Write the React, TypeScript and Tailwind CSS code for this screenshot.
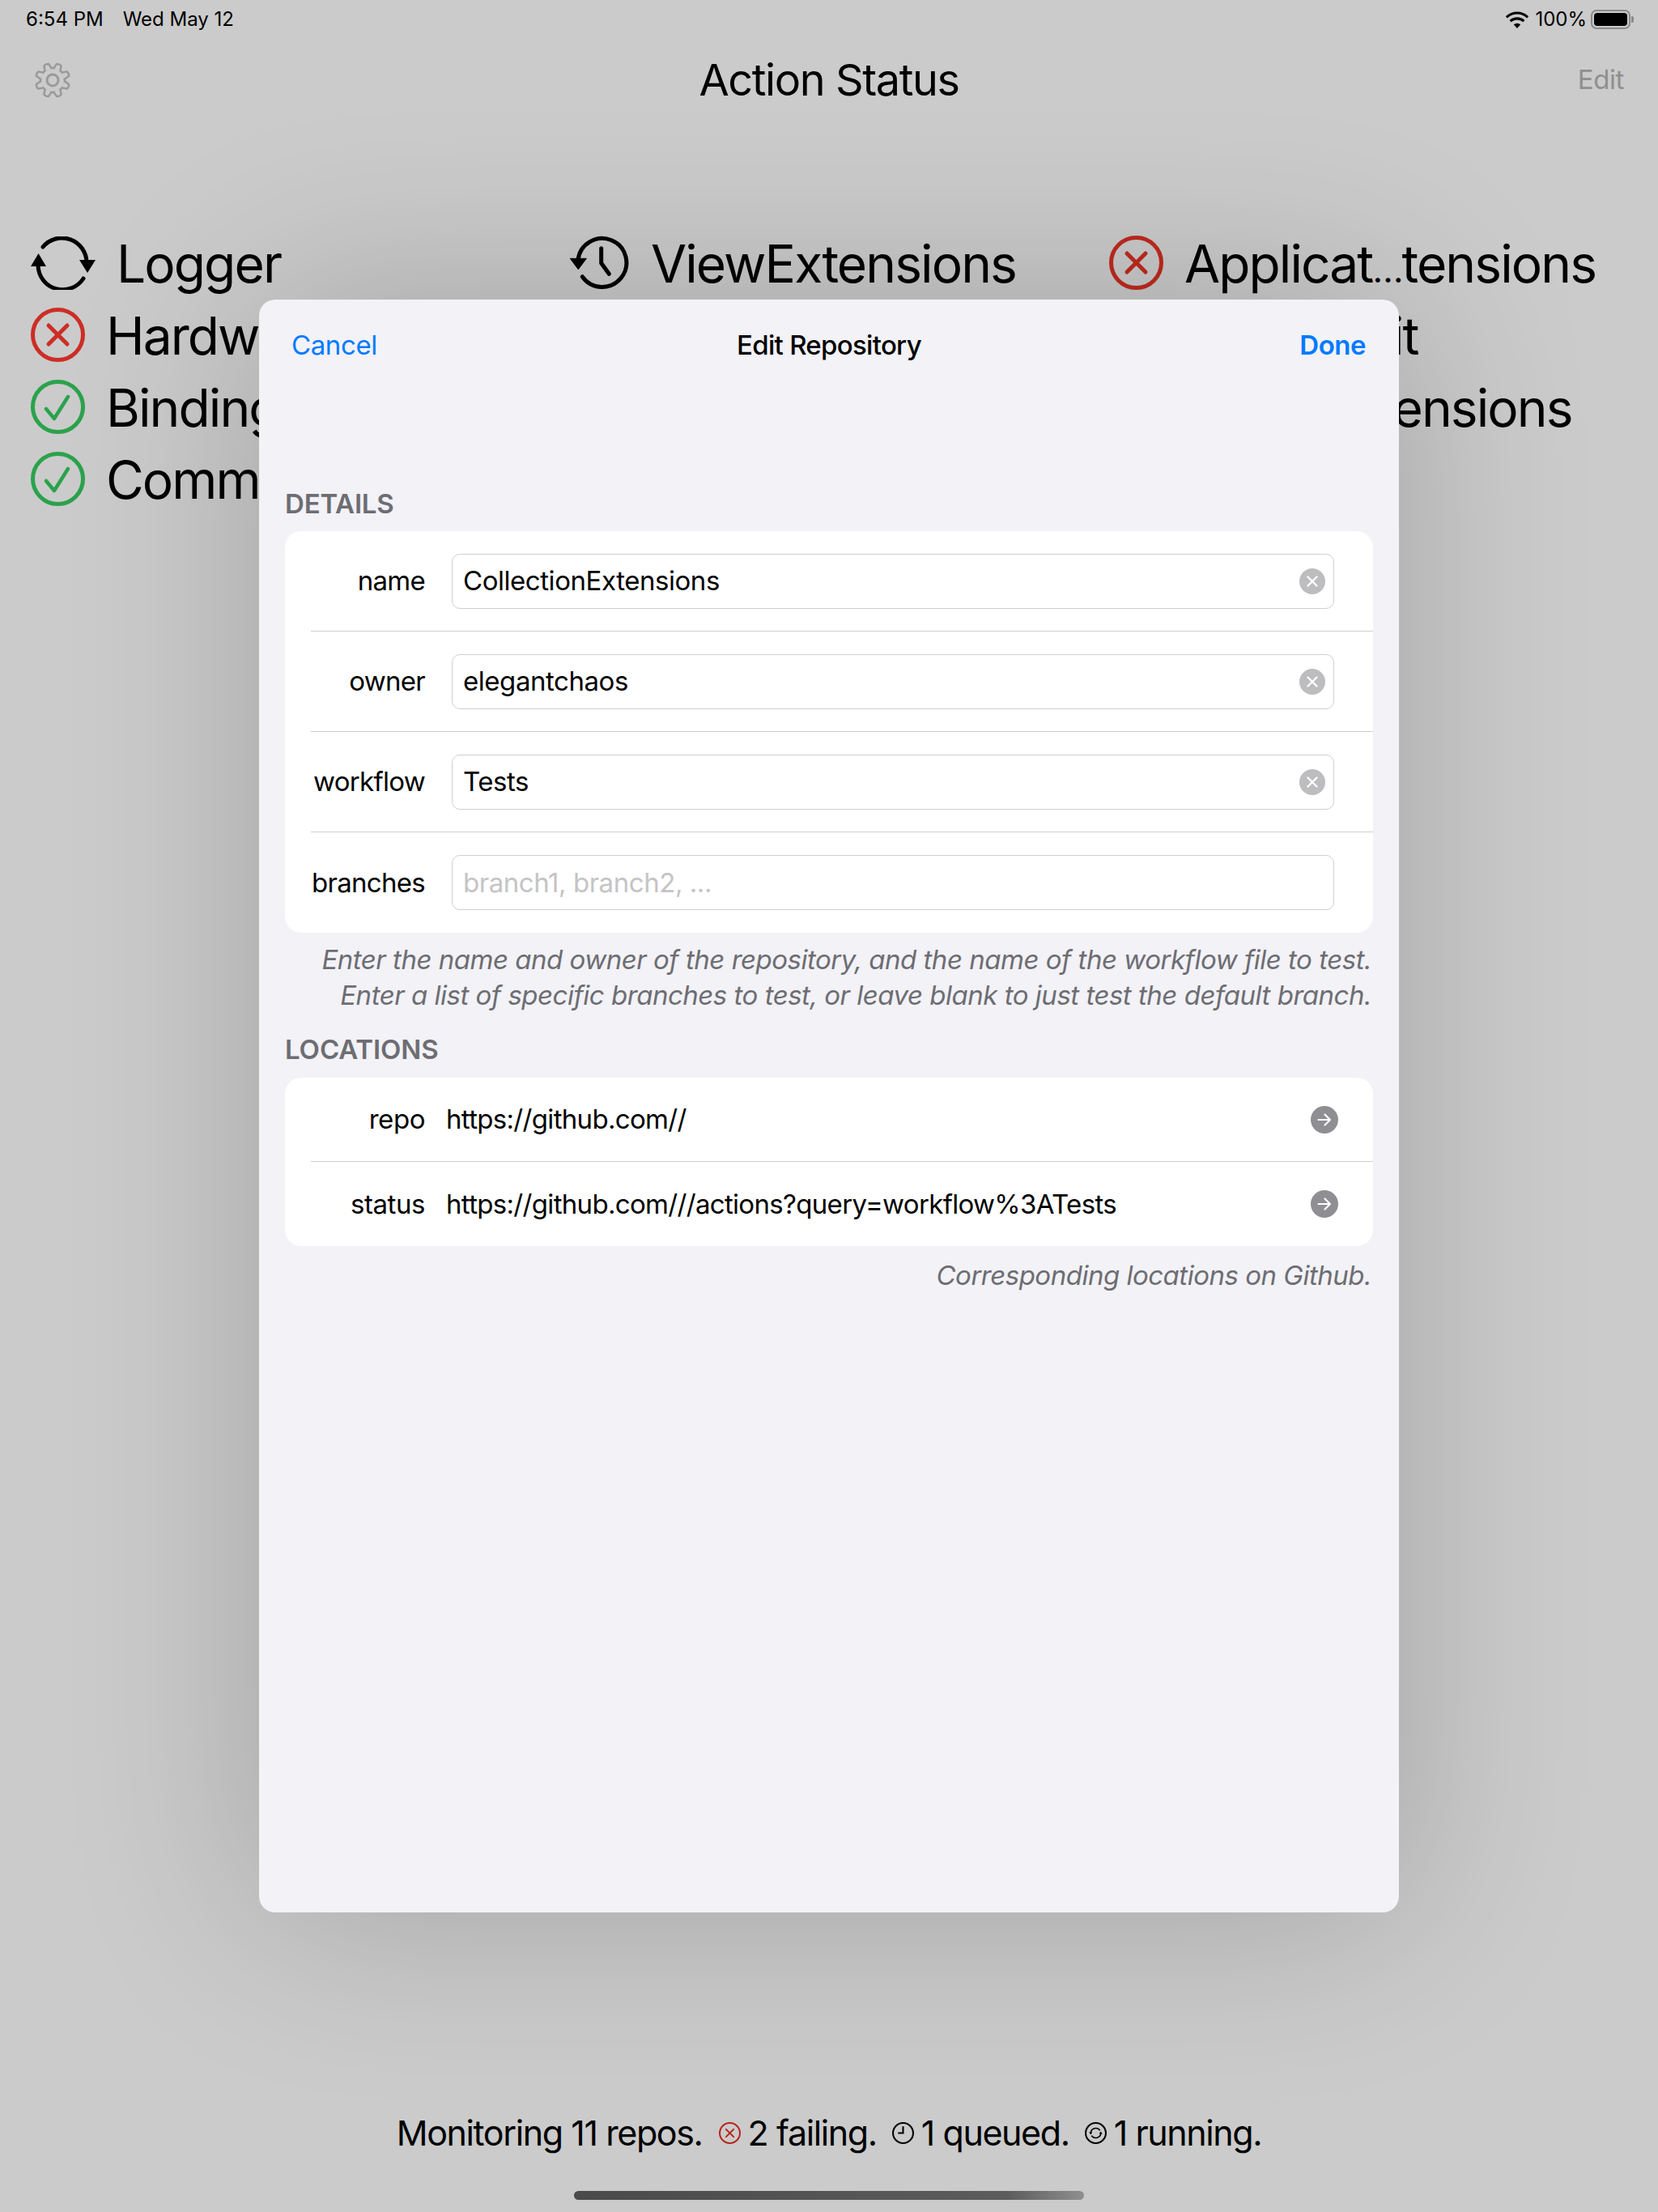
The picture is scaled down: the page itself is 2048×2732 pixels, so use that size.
import React from "react";

function XCircle({ cls, size = 67 }: { cls: string; size?: number }) {
  return (
    <svg width={size} height={size} viewBox="0 0 67 67" fill="none" className={cls}>
      <circle cx="33.5" cy="33.5" r="31" stroke="currentColor" strokeWidth="5" />
      <path d="M22 22 L45 45 M45 22 L22 45" stroke="currentColor" strokeWidth="5" strokeLinecap="round" />
    </svg>
  );
}

function CheckCircle() {
  return (
    <svg width="67" height="67" viewBox="0 0 67 67" fill="none" className="text-[#2ba24c] shrink-0">
      <circle cx="33.5" cy="33.5" r="31" stroke="currentColor" strokeWidth="5" />
      <path d="M19 36 L29 48 L46 21" stroke="currentColor" strokeWidth="4.5" strokeLinecap="round" strokeLinejoin="round" />
    </svg>
  );
}

function SyncIcon() {
  return (
    <svg width="80" height="66" viewBox="0 0 80 66" fill="none" className="text-black shrink-0">
      <path d="M15 13 A30.5 30.5 0 0 1 69 33" stroke="currentColor" strokeWidth="5" strokeLinecap="round" />
      <path d="M65 52 A30.5 30.5 0 0 1 9 36" stroke="currentColor" strokeWidth="5" strokeLinecap="round" />
      <polygon points="60,29 80,29 70,45" fill="currentColor" />
      <polygon points="0,37 19,37 9.5,21" fill="currentColor" />
    </svg>
  );
}

function ClockIcon() {
  return (
    <svg width="76" height="70" viewBox="0 0 76 70" fill="none" className="text-black shrink-0">
      <path d="M16.3 51.7 A30 30 0 1 0 11 31" stroke="currentColor" strokeWidth="5" strokeLinecap="round" />
      <polygon points="1.3,29.3 21.3,29.3 11.3,42.7" fill="currentColor" stroke="currentColor" strokeWidth="1" strokeLinejoin="round" />
      <path d="M39.7 16.7 V35 L49.3 48.3" stroke="currentColor" strokeWidth="5" strokeLinecap="round" strokeLinejoin="round" />
    </svg>
  );
}

function GearIcon() {
  const teeth = [0, 45, 90, 135, 180, 225, 270, 315];
  return (
    <svg width="46" height="46" viewBox="0 0 46 46" fill="none" className="text-[#9a9a9a] -mt-[3px]">
      <circle cx="23" cy="23" r="7" stroke="currentColor" strokeWidth="3" />
      <circle cx="23" cy="23" r="15" stroke="currentColor" strokeWidth="2.5" />
      {teeth.map((a) => (
        <path
          key={a}
          d="M18.5 9.5 L20 2.5 Q23 1 26 2.5 L27.5 9.5"
          stroke="currentColor"
          strokeWidth="2.5"
          strokeLinejoin="round"
          fill="#cbcbcb"
          transform={`rotate(${a + 22.5} 23 23)`}
        />
      ))}
    </svg>
  );
}

function Wifi() {
  return (
    <svg width="30" height="21" viewBox="0 0 28 20" fill="none" className="text-black">
      <path d="M1.5 7 A18 18 0 0 1 26.5 7" stroke="currentColor" strokeWidth="3" />
      <path d="M6 11.5 A12 12 0 0 1 22 11.5" stroke="currentColor" strokeWidth="3" />
      <path d="M10 15.5 A6 6 0 0 1 18 15.5 L14 20 Z" fill="currentColor" />
    </svg>
  );
}

function Battery() {
  return (
    <div className="flex items-center">
      <div className="w-[49px] h-[24px] rounded-[7px] border-2 border-[#8a8a8a] p-[2px]">
        <div className="w-full h-full rounded-[4px] bg-black" />
      </div>
      <div className="w-[3px] h-[8px] ml-[1px] rounded-r-[2px] bg-[#8a8a8a]" />
    </div>
  );
}

function ClearBtn() {
  return (
    <div className="w-[32px] h-[32px] rounded-full bg-[#bdbdc0] flex items-center justify-center shrink-0">
      <svg width="16" height="16" viewBox="0 0 16 16" fill="none">
        <path d="M2.5 2.5 L13.5 13.5 M13.5 2.5 L2.5 13.5" stroke="white" strokeWidth="2.4" strokeLinecap="round" />
      </svg>
    </div>
  );
}

function ArrowBtn() {
  return (
    <div className="w-[34px] h-[34px] rounded-full bg-[#8e8e93] flex items-center justify-center shrink-0">
      <svg width="20" height="20" viewBox="0 0 20 20" fill="none">
        <path d="M2.5 10 H17 M10.5 3.5 L17 10 L10.5 16.5" stroke="white" strokeWidth="2.2" strokeLinecap="round" strokeLinejoin="round" />
      </svg>
    </div>
  );
}

function Repo({ icon, name, indent }: { icon: React.ReactNode; name: React.ReactNode; indent: string }) {
  return (
    <div className="flex items-center h-[89px]">
      {icon}
      <span className={`${indent} mt-[2px] text-[64px] leading-none tracking-[-1.9px] text-black whitespace-nowrap`}>{name}</span>
    </div>
  );
}

function FieldRow({ label, value, placeholder, last }: { label: string; value?: string; placeholder?: string; last?: boolean }) {
  return (
    <div className={`h-[124px] ml-[32px] flex items-center ${last ? "" : "border-b-[1.5px] border-[#cfcfd1]"}`}>
      <div className="w-[141px] pt-[1px] text-right text-[33px] tracking-[-0.7px] text-black shrink-0">{label}</div>
      <div className="ml-[33px] w-[1090px] h-[68px] rounded-[10px] border-[1.5px] border-[#cfcfd1] bg-white flex items-center pl-[13px] pr-[10px]">
        <span className={`flex-1 pt-[1px] text-[33px] tracking-[-0.45px] ${value ? "text-black" : "text-[#c4c4c6]"}`}>{value ?? placeholder}</span>
        {value ? <ClearBtn /> : null}
      </div>
    </div>
  );
}

function LinkRow({ label, value, last }: { label: string; value: string; last?: boolean }) {
  return (
    <div className={`h-[104px] ml-[32px] flex items-center pr-[43px] ${last ? "" : "border-b-[1.5px] border-[#cfcfd1]"}`}>
      <div className="w-[141px] pt-[1px] text-right text-[33px] tracking-[-0.45px] text-black shrink-0">{label}</div>
      <div className="ml-[26px] pt-[1px] flex-1 text-[33px] tracking-[-0.68px] text-black">{value}</div>
      <ArrowBtn />
    </div>
  );
}

export default function App() {
  return (
    <div className="relative w-[2048px] h-[2732px] overflow-hidden bg-[#cbcbcb] flex flex-col font-['Inter','Liberation_Sans',sans-serif]">
      {/* status bar */}
      <div className="h-[48px] pl-[32px] pr-[30px] flex items-center justify-between text-[24px] text-black">
        <div className="flex items-center gap-[24px]">
          <span>6:54 PM</span>
          <span>Wed May 12</span>
        </div>
        <div className="flex items-center gap-[7px]">
          <Wifi />
          <span className="mr-[-2px]">100%</span>
          <Battery />
        </div>
      </div>

      {/* nav bar */}
      <div className="h-[104px] pl-[42px] pr-[42px] grid grid-cols-[1fr_auto_1fr] items-center">
        <GearIcon />
        <span className="-mt-[3px] text-[54px] tracking-[-1.4px] text-black">Action Status</span>
        <span className="justify-self-end -mt-[3px] text-[33px] tracking-[-0.4px] text-[#8f8f8f]">Edit</span>
      </div>

      {/* repo grid */}
      <div className="mt-[128px] pl-[38px] grid grid-cols-[665px_667px_1fr]">
        <Repo icon={<SyncIcon />} name="Logger" indent="ml-[26px]" />
        <Repo icon={<ClockIcon />} name="ViewExtensions" indent="ml-[25px]" />
        <Repo
          icon={<XCircle cls="text-[#c02a1f] shrink-0" />}
          name={
            <>
              Applicat<span className="text-[44px]">…</span>tensions
            </>
          }
          indent="ml-[26px]"
        />
        <Repo icon={<XCircle cls="text-[#cc2e26] shrink-0" />} name="HardwareWallet" indent="ml-[26px]" />
        <Repo icon={<CheckCircle />} name="Actions" indent="ml-[26px]" />
        <Repo icon={<CheckCircle />} name="ActionsKit" indent="ml-[26px]" />
        <Repo icon={<CheckCircle />} name="Bindings" indent="ml-[26px]" />
        <Repo icon={<CheckCircle />} name="Datastore" indent="ml-[26px]" />
        <Repo icon={<CheckCircle />} name="StringExtensions" indent="ml-[26px]" />
        <Repo icon={<CheckCircle />} name="CommandShell" indent="ml-[26px]" />
        <Repo icon={<CheckCircle />} name="Files" indent="ml-[26px]" />
      </div>

      {/* footer */}
      <div className="mt-auto flex items-center justify-center text-[43px] tracking-[-1.4px] text-black h-[56px] mb-[70px]">
        <span>Monitoring 11 repos.</span>
        <XCircle cls="text-[#b8231c] ml-[20px] mr-[9px] shrink-0" size={27} />
        <span>2 failing.</span>
        <svg width="27" height="27" viewBox="0 0 26 26" fill="none" className="ml-[19px] mr-[9px] shrink-0">
          <circle cx="13" cy="13" r="12" stroke="black" strokeWidth="2" />
          <path d="M13 5 V13 H7" stroke="black" strokeWidth="2" />
        </svg>
        <span>1 queued.</span>
        <svg width="27" height="27" viewBox="0 0 26 26" fill="none" className="ml-[19px] mr-[9px] shrink-0">
          <circle cx="13" cy="13" r="12" stroke="black" strokeWidth="2" />
          <path d="M7 13 A6 6 0 0 1 18 10 M19 13 A6 6 0 0 1 8 16" stroke="black" strokeWidth="1.6" />
          <path d="M5 12 H9 L7 15 Z M17 14 H21 L19 11 Z" fill="black" />
        </svg>
        <span>1 running.</span>
      </div>

      {/* home indicator */}
      <div className="absolute left-[709px] top-[2706px] w-[630px] h-[11px] rounded-full bg-[linear-gradient(90deg,#4a4a4a,#5c5c5c_85%,#8f8f8f)]" />

      {/* modal sheet */}
      <div className="absolute left-[320px] top-[370px] w-[1408px] h-[1992px] rounded-[20px] bg-[#f2f2f7] shadow-[0_0_240px_rgba(0,10,0,0.2)] px-[32px]">
        <div className="h-[114px] -mx-[32px] px-[41px] grid grid-cols-[1fr_auto_1fr] items-center text-[33px]">
          <span className="text-[#007aff] tracking-[-0.4px] -ml-[1px]">Cancel</span>
          <span className="font-medium text-black tracking-[-0.7px]">Edit Repository</span>
          <span className="justify-self-end font-semibold text-[#007aff] tracking-[-0.5px]">Done</span>
        </div>

        <div className="mt-[114px] h-[58px] text-[33px] font-semibold tracking-[-0.2px] text-[#6d6d72]">DETAILS</div>
        <div className="rounded-[20px] bg-white">
          <FieldRow label="name" value="CollectionExtensions" />
          <FieldRow label="owner" value="elegantchaos" />
          <FieldRow label="workflow" value="Tests" />
          <FieldRow label="branches" placeholder="branch1, branch2, ..." last />
        </div>
        <div className="mt-[11px] pr-[2px] text-right italic text-[33px] leading-[44px] tracking-[-0.49px] text-[#6d6d72]">
          <div>Enter the name and owner of the repository, and the name of the workflow file to test.</div>
          <div>Enter a list of specific branches to test, or leave blank to just test the default branch.</div>
        </div>

        <div className="mt-[21px] h-[59px] text-[33px] font-semibold tracking-[-0.1px] text-[#6d6d72]">LOCATIONS</div>
        <div className="rounded-[20px] bg-white">
          <LinkRow label="repo" value="https://github.com//" />
          <LinkRow label="status" value="https://github.com///actions?query=workflow%3ATests" last />
        </div>
        <div className="mt-[14px] pr-[2px] text-right italic text-[33px] leading-[44px] tracking-[-0.5px] text-[#6d6d72]">Corresponding locations on Github.</div>
      </div>
    </div>
  );
}
